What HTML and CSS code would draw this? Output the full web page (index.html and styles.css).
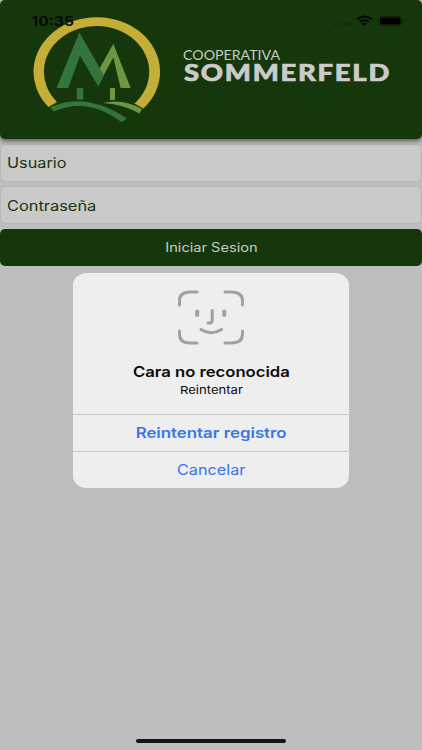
FILE: index.html
```html
<!DOCTYPE html>
<html lang="es">
<head>
<meta charset="utf-8">
<title>Cooperativa Sommerfeld</title>
<link rel="stylesheet" href="styles.css">
</head>
<body>
<main class="screen">
  <header class="banner">
    <svg class="brand" viewBox="0 0 422 139" role="img" aria-label="Cooperativa Sommerfeld">
      <path fill="#c5ad38" d="M48.500 107A63.3 54.5 0 1 1 143.500 108.500L134.500 103.500A52.7 45.7 0 1 0 57 102Z"/>
      <path fill="#719641" d="M113.3 43.7L130.7 88H120.6L113.3 57.5L103.3 76L99.6 68.5Z"/>
      <path fill="#34743d" d="M79.3 32.5L104 75.5L98.3 86.5L80 55.5L68.3 88H56.5Z"/>
      <path fill="#34743d" d="M76.8 88h6.5v11.5h-6.5z"/>
      <path fill="#719641" d="M110 88h5v12h-5zM102.5 103Q123 98 142 109L139.500 113.500Q123 104 102.500 103Z"/>
      <path fill="#34743d" d="M50 107.300Q86 91 127 118.500L121.500 122Q87 96.500 54 111.500Z"/>
      <text class="brand-top" x="183" y="60" textLength="97" lengthAdjust="spacingAndGlyphs">COOPERATIVA</text>
      <text class="brand-name" x="184" y="80.500" textLength="207" lengthAdjust="spacingAndGlyphs">SOMMERFELD</text>
    </svg>
    <div class="status">
      <svg class="status-art" viewBox="0 0 422 40">
        <text class="clock" x="31.500" y="25.700" textLength="42.500" lengthAdjust="spacingAndGlyphs">10:35</text>
        <g fill="#102b09"><circle cx="334.500" cy="24" r="1.500"/><circle cx="339.500" cy="24" r="1.500"/><circle cx="344.500" cy="24" r="1.500"/><circle cx="349.500" cy="24" r="1.500"/></g>
        <g fill="none" stroke="#020802" stroke-width="2"><path d="M357.200 19.200Q364.500 13.700 371.800 19.200"/><path d="M360 21.800Q364.500 18.500 369 21.800"/></g>
        <path fill="#020802" d="M361.800 23.500Q364.500 21.700 367.200 23.500L364.500 25.800Z"/>
        <rect x="378.500" y="16.500" width="23.500" height="9" rx="2.500" fill="none" stroke="#0d2607"/>
        <rect x="380" y="17.500" width="20.500" height="7" rx="1.300" fill="#000"/>
        <path d="M403.200 19.500q1.500 1.500 0 3z" fill="#07180a"/>
      </svg>
    </div>
  </header>
  <form class="login">
    <label class="field"><span class="t-user">Usuario</span></label>
    <label class="field"><span class="t-pass">Contraseña</span></label>
    <button class="submit" type="button"><span class="t-submit">Iniciar Sesion</span></button>
  </form>
  <section class="alert" role="alertdialog">
    <div class="message">
      <svg class="face" viewBox="0 0 68 56" fill="none" stroke="#a0a0a0" stroke-width="3" stroke-linecap="round">
        <path d="M2.500 15V11Q2.500 2 13 2H20M48 2H54Q65.500 2 65.500 11V15M65.500 41V44Q65.500 53 54 53H48M20 53H13Q2.500 53 2.500 44V41"/>
        <path stroke-width="4" d="M20.200 21.500V25M47.200 21.500V25"/>
        <path d="M35.200 20.500V30Q35.200 33 32 33H31M24 39.500Q34 46 44.500 39.500"/>
      </svg>
      <h1><span class="t-title">Cara no reconocida</span></h1>
      <p><span class="t-retry">Reintentar</span></p>
    </div>
    <button class="action primary" type="button"><span class="t-again">Reintentar registro</span></button>
    <button class="action" type="button"><span class="t-cancel">Cancelar</span></button>
  </section>
  <div class="home-bar"></div>
</main>
</body>
</html>
```

FILE: styles.css
```css
* { box-sizing: border-box; }
body { margin: 0; background: #bebebe; font-family: Inter, "Liberation Sans", sans-serif; }
.screen { width: 422px; height: 750px; display: flex; flex-direction: column; align-items: center; overflow: hidden; }
.banner { position: relative; width: 422px; height: 138.500px; flex: none; background: #16370b; border-radius: 5px; box-shadow: 0 2px 5px rgba(0,0,0,.55); }
.brand, .status-art { display: block; width: 100%; }
.status { position: absolute; inset: 0 0 auto; }
.brand-top { font: 400 13px Lato, sans-serif; fill: #c7cbc5; }
.brand-name { font: 900 23.5px Lato, sans-serif; letter-spacing: 1.5px; fill: #cbcbcb; stroke: #cbcbcb; stroke-width: .7px; }
.clock { font: 600 13.3px Inter, sans-serif; fill: #020702; }
.login { width: 422px; padding-top: 5px; display: flex; flex-direction: column; gap: 4.500px; }
.field { height: 38px; display: flex; align-items: center; padding-left: 6px; background: #c9c9c9; border: 1px solid #b6b6b6; border-radius: 5px; color: #16370b; font-size: 14px; }
span { display: inline-block; white-space: nowrap; transform-origin: center; }
.field span { transform-origin: left; }
button { border: 0; padding: 0; font-family: inherit; }
.submit { height: 37px; background: #16370b; color: #c6cbc4; border-radius: 5px; font-size: 12.5px; }
.alert { width: 276px; height: 215px; margin-top: 7.500px; background: #eee; border-radius: 14px / 12px; overflow: hidden; display: flex; flex-direction: column; }
.message { height: 140.500px; padding-top: 16.500px; display: flex; flex-direction: column; align-items: center; color: #0b0b0b; }
.face { width: 68px; height: 56px; }
h1 { margin: 16px 0 0; font-size: 14.300px; line-height: 20px; font-weight: 600; }
p { margin: 0; font-size: 11px; line-height: 16px; }
.action { height: 37px; border-top: 1px solid #c9cbcb; background: none; color: #3875e6; font-size: 14.300px; }
.primary { font-weight: 600; }
.t-user { transform: scaleX(1.16); }
.t-pass { transform: scaleX(1.17); }
.t-submit { transform: scaleX(1.17); }
.t-title { transform: scaleX(1.165); }
.t-retry { transform: scaleX(1.19); }
.t-again { transform: scaleX(1.177); }
.t-cancel { transform: scaleX(1.135); }
.home-bar { width: 150px; height: 4px; margin-top: auto; margin-bottom: 7px; flex: none; border-radius: 3px; background: #151515; }
```
